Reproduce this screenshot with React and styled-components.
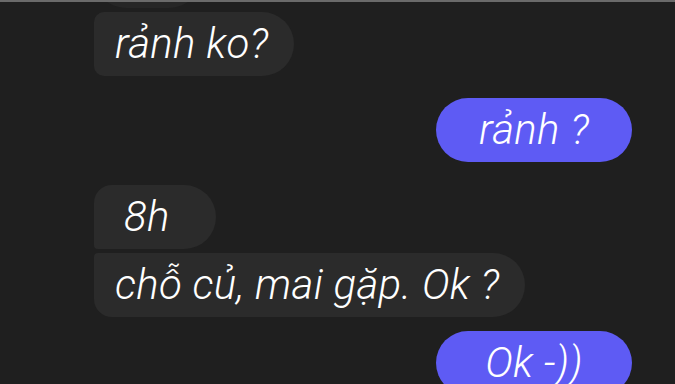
import React from "react";
import styled, { createGlobalStyle } from "styled-components";

const Global = createGlobalStyle`
  html, body { margin: 0; background: #1e1e1e; }
`;

const Screen = styled.div`
  width: 675px;
  height: 384px;
  box-sizing: border-box;
  border-top: 2px solid #6a6a6a;
  background: #1f1f1f;
  overflow: hidden;
`;

const Thread = styled.div`
  display: flex;
  flex-direction: column;
  padding: 0 43px 0 94px;
`;

const Bubble = styled.div`
  align-self: ${(p) => (p.$mine ? "flex-end" : "flex-start")};
  box-sizing: border-box;
  height: 64px;
  margin-top: ${(p) => p.$gap}px;
  min-width: ${(p) => (p.$mine ? 196 : p.$min || 0)}px;
  padding: 8px ${(p) => (p.$mine ? 40 : 26)}px 8px ${(p) => p.$left || (p.$mine ? 40 : 21)}px;
  border-radius: ${(p) => p.$radius || "32px"};
  background: ${(p) => (p.$mine ? "#5e5bf4" : "#2b2b2b")};
  color: #fff;
  font-family: Roboto, "Noto Sans", sans-serif;
  font-style: italic;
  font-weight: 350;
  font-size: 42px;
  letter-spacing: 0.3px;
  line-height: 47px;
  text-align: ${(p) => (p.$mine ? "center" : "left")};
  white-space: nowrap;
`;

const Ghost = styled(Bubble)`
  width: 107px;
  background: #262626;
`;

export default function App() {
  return (
    <>
      <Global />
      <Screen>
        <Thread>
          <Ghost $gap={-58} />
          <Bubble $gap={4} $radius="10px 32px 32px 10px">rảnh ko?</Bubble>
          <Bubble $mine $gap={22}>rảnh ?</Bubble>
          <Bubble $gap={23} $min={122} $left={30} $radius="18px 32px 32px 4px">
            8h
          </Bubble>
          <Bubble $gap={4} $radius="4px 32px 32px 18px">
            chỗ củ, mai gặp. Ok ?
          </Bubble>
          <Bubble $mine $gap={14}>Ok -))</Bubble>
        </Thread>
      </Screen>
    </>
  );
}
